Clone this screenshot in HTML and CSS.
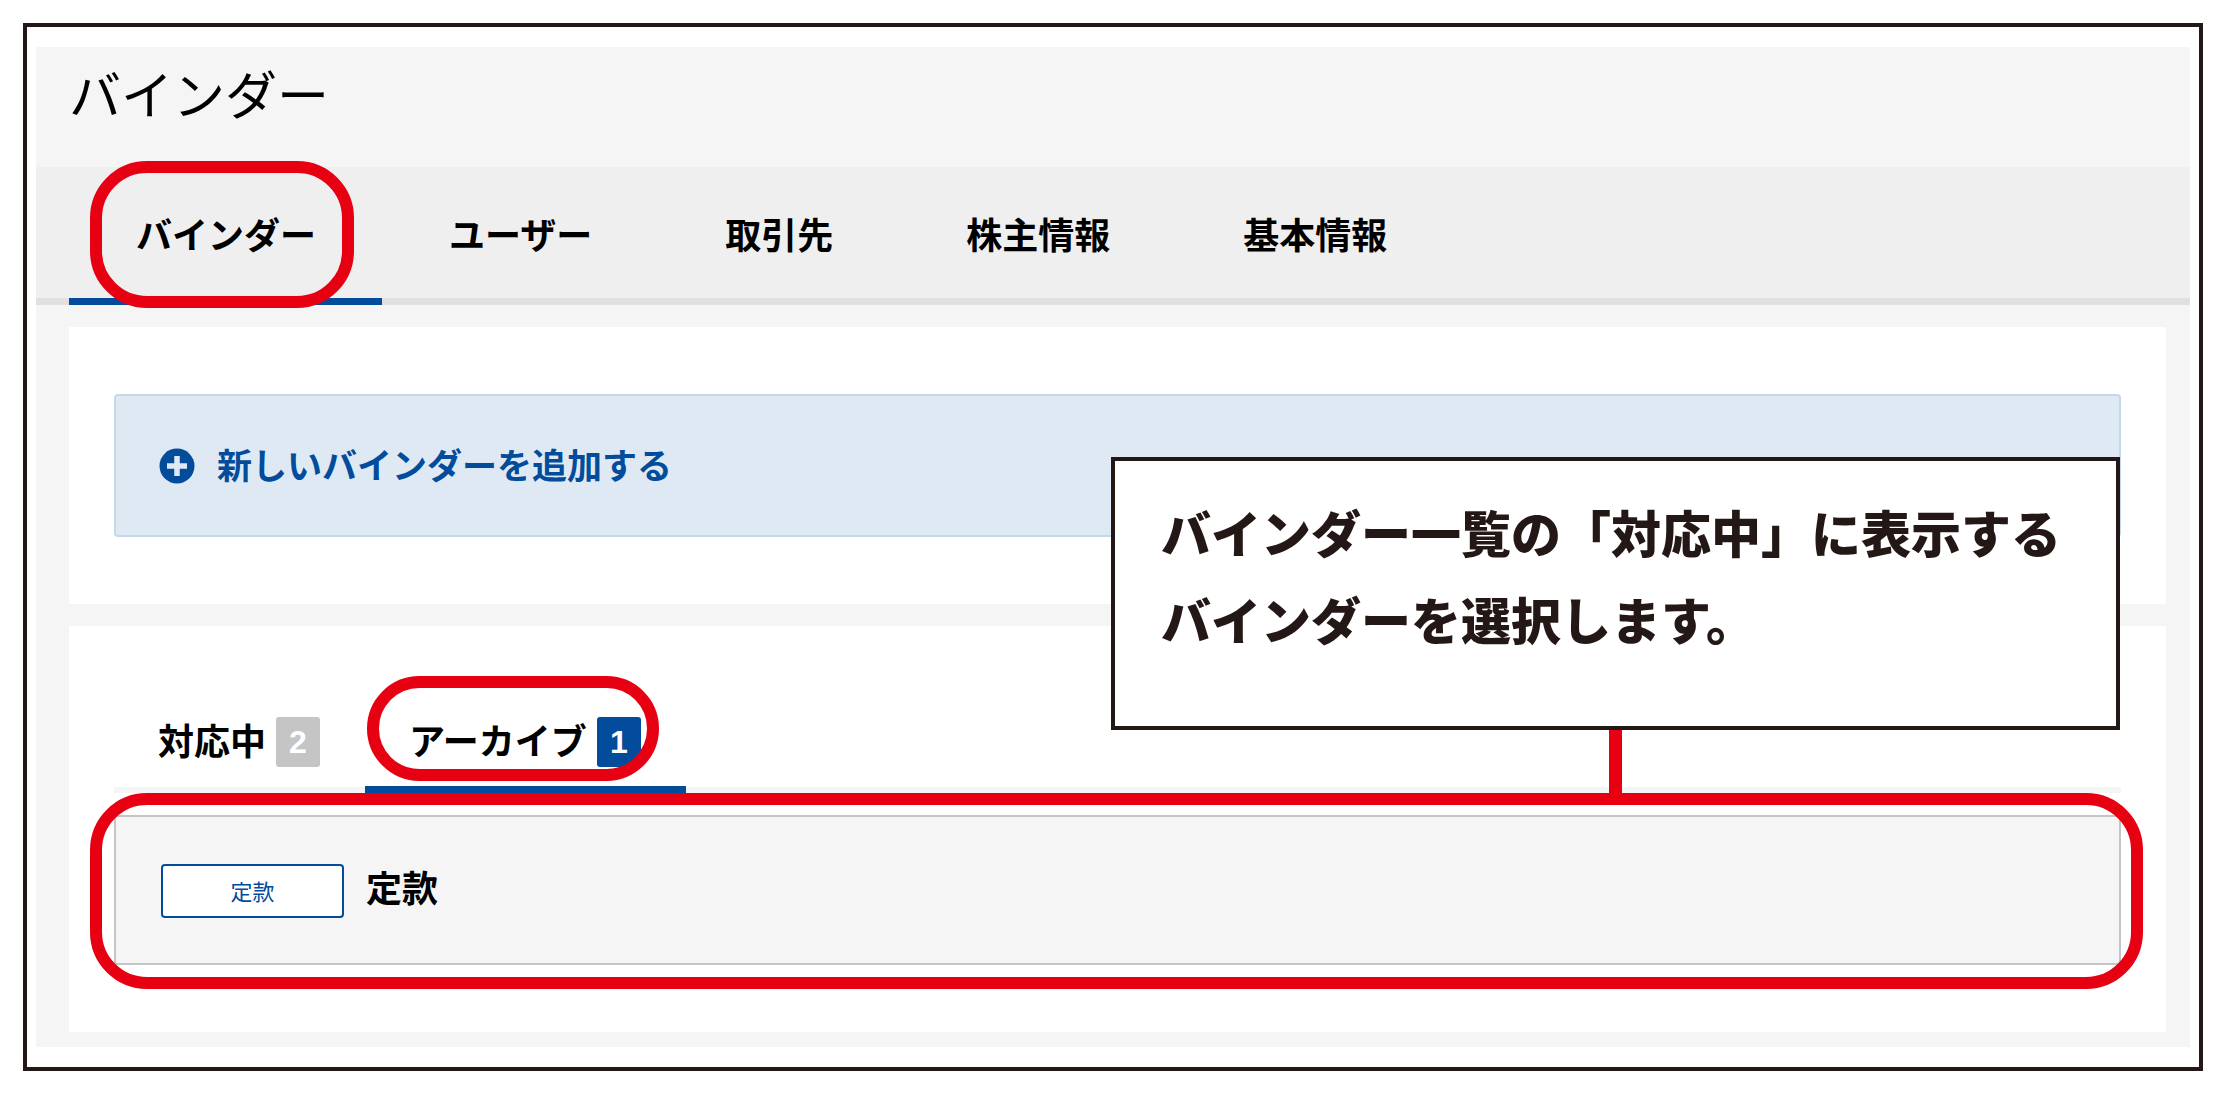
FILE: index.html
```html
<!DOCTYPE html>
<html lang="ja">
<head>
  <meta charset="utf-8">
  <meta name="viewport" content="width=device-width, initial-scale=1">
  <title>バインダー</title>
  <link rel="stylesheet" href="styles.css">
</head>
<body>
  <div class="frame">
    <div class="app">
      <header class="page-header">
        <h1 class="page-title">バインダー</h1>
      </header>

      <nav class="page-nav">
        <a class="page-tab page-tab-active" href="#binder">バインダー<span class="ring ring-nav"></span></a>
        <a class="page-tab" href="#user">ユーザー</a>
        <a class="page-tab" href="#client">取引先</a>
        <a class="page-tab" href="#stock">株主情報</a>
        <a class="page-tab" href="#basic">基本情報</a>
      </nav>

      <main class="content">
        <section class="card">
          <button class="add-button" type="button">
            <svg class="add-icon" viewBox="0 0 36 36" aria-hidden="true">
              <circle cx="18" cy="18" r="17.5" fill="currentColor"/>
              <path d="M18 8v20M8 18h20" fill="none" stroke="#dfe9f4" stroke-width="5.5"/>
            </svg>
            <span class="add-label">新しいバインダーを追加する</span>
          </button>
        </section>

        <section class="card">
          <div class="status-tabs" role="tablist">
            <button class="status-tab" type="button" role="tab" aria-selected="false">対応中<span class="count">2</span></button>
            <button class="status-tab status-tab-active" type="button" role="tab" aria-selected="true">アーカイブ<span class="count count-active">1</span><span class="ring ring-status"></span></button>
          </div>

          <div class="binder-row">
            <span class="tag">定款</span>
            <h2 class="binder-name">定款</h2>
            <span class="ring ring-row"></span>
            <p class="callout">バインダー一覧の「対応中」に表示する<br>バインダーを選択します。</p>
          </div>
        </section>
      </main>
    </div>
  </div>
</body>
</html>
```

FILE: styles.css
```css
* {
  box-sizing: border-box;
}

:root {
  --blue: #034c9b;
  --red: #e60012;
  --ink: #231815;
  --grey: #f5f5f5;
}

body {
  margin: 0;
  background: #fff;
  color: #000;
  font-family: "Noto Sans CJK JP", sans-serif;
}

button {
  font-family: inherit;
  cursor: pointer;
}

.frame {
  margin: 23px;
  padding: 20px 9px;
  border: 4px solid var(--ink);
}

.app {
  background: var(--grey);
}

/* Title and main navigation */

.page-header {
  padding: 8px 33px 36px;
}

.page-title {
  margin: 0;
  font-size: 52px;
  font-weight: 400;
  line-height: 76px;
}

.page-nav {
  display: flex;
  padding-left: 33px;
  background: #efefef;
  box-shadow: inset 0 -7px #e2e0df;
}

.page-tab {
  position: relative;
  padding: 40px 66px 39px 67px;
  border-bottom: 7px solid transparent;
  color: inherit;
  font-size: 36px;
  font-weight: 700;
  line-height: 52px;
  text-decoration: none;
  white-space: nowrap;
}

.page-tab-active {
  border-bottom-color: var(--blue);
}

/* Cards */

.content {
  display: flex;
  flex-direction: column;
  gap: 22px;
  padding: 22px 24px 15px 33px;
}

.card {
  padding: 67px 45px;
  background: #fff;
}

.add-button {
  display: flex;
  align-items: center;
  gap: 22px;
  width: 100%;
  padding: 43px;
  border: 2px solid #c5d8ea;
  border-radius: 4px;
  background: #dfe9f4;
  color: var(--blue);
  font-size: 35px;
  font-weight: 700;
  line-height: 49px;
}

.add-label {
  padding-bottom: 4px;
}

.add-icon {
  width: 36px;
  height: 36px;
}

.status-tabs {
  display: flex;
  margin-bottom: 22px;
  box-shadow: inset 0 -6px var(--grey);
}

.status-tab {
  position: relative;
  display: flex;
  align-items: flex-start;
  gap: 10px;
  padding: 24px 45px 19px 44px;
  border: 0;
  border-bottom: 7px solid transparent;
  background: none;
  color: inherit;
  font-size: 36px;
  font-weight: 700;
  line-height: 44px;
}

.status-tab-active {
  border-bottom-color: var(--blue);
}

.count {
  min-width: 44px;
  border-radius: 3px;
  background: #c5c5c5;
  color: #fff;
  font-family: "Liberation Sans", sans-serif;
  font-size: 32px;
  line-height: 50px;
  text-align: center;
}

.count-active {
  background: var(--blue);
}

.binder-row {
  position: relative;
  display: flex;
  align-items: center;
  gap: 22px;
  padding: 46px 45px 44px;
  border: 2px solid #c5c5c5;
  border-radius: 3px;
  background: var(--grey);
}

.tag {
  width: 183px;
  padding-bottom: 2px;
  border: 2px solid var(--blue);
  border-radius: 4px;
  background: #fff;
  color: var(--blue);
  font-size: 22px;
  line-height: 48px;
  text-align: center;
}

.binder-name {
  margin: 0;
  padding-bottom: 10px;
  font-size: 36px;
  line-height: 46px;
}

/* Guide marks drawn over the screen */

.ring {
  position: absolute;
  z-index: 1;
  border: 12px solid var(--red);
  border-radius: 57px;
  pointer-events: none;
}

.ring-nav {
  inset: -6px 28px -10px 21px;
}

.ring-status {
  inset: -17px 27px 5px 2px;
}

.ring-row {
  inset: -24px -24px -26px -26px;
}

.callout {
  position: absolute;
  right: -1px;
  bottom: calc(100% + 87px);
  z-index: 2;
  margin: 0;
  padding: 27px 55px 64px 46px;
  border: 4px solid var(--ink);
  background: #fff;
  color: var(--ink);
  font-size: 50px;
  font-weight: 900;
  line-height: 87px;
  white-space: nowrap;
}

.callout::after {
  content: "";
  position: absolute;
  top: calc(100% + 4px);
  left: 494px;
  width: 13px;
  height: 64px;
  background: var(--red);
}
```
